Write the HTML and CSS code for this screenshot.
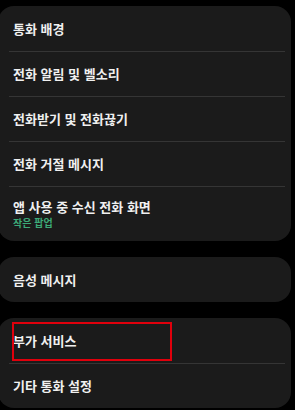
FILE: index.html
```html
<!DOCTYPE html>
<html lang="ko">
<head>
    <meta charset="UTF-8">
    <meta name="viewport" content="width=device-width, initial-scale=1.0">
    <title>통화 설정</title>
    <link rel="stylesheet" href="styles.css">
</head>
<body>
    <div class="card">
        <div class="item">통화 배경</div>
        <div class="item">전화 알림 및 벨소리</div>
        <div class="item">전화받기 및 전화끊기</div>
        <div class="item">전화 거절 메시지</div>
        <div class="item item-sub">
            <p>앱 사용 중 수신 전화 화면</p>
            <span class="sub">작은 팝업</span>
        </div>
    </div>
    <div class="card">
        <div class="item">음성 메시지</div>
    </div>
    <div class="card">
        <div class="item marked">
            <span class="mark"></span>
            부가 서비스
        </div>
        <div class="item">기타 통화 설정</div>
    </div>
</body>
</html>
```

FILE: styles.css
```css
* {
    margin: 0;
    padding: 0;
    box-sizing: border-box;
}
body {
    width: 295px;
    height: 410px;
    overflow: hidden;
    background-color: #000;
    font-family: "Noto Sans CJK KR", "Noto Sans", sans-serif;
    padding-top: 6px;
}
div.card {
    margin: 0 4px 16px -2px;
    border-radius: 16px;
    background-color: #1b1b1b;
}
div.item {
    position: relative;
    height: 45px;
    padding-left: 15px;
    display: flex;
    align-items: center;
    color: #f0f0f0;
    font-size: 13px;
    font-weight: 700;
}
div.item + div.item::before {
    content: "";
    position: absolute;
    top: 0;
    left: 11px;
    right: 6px;
    height: 1px;
    background-color: #353535;
}
div.item-sub {
    height: 55px;
    flex-direction: column;
    align-items: flex-start;
    justify-content: center;
}
span.sub {
    color: #3daa78;
    font-size: 10px;
    line-height: 14px;
}
span.mark {
    position: absolute;
    left: 14px;
    top: 4px;
    width: 160px;
    height: 39px;
    border: 2px solid #e0000c;
}
```
